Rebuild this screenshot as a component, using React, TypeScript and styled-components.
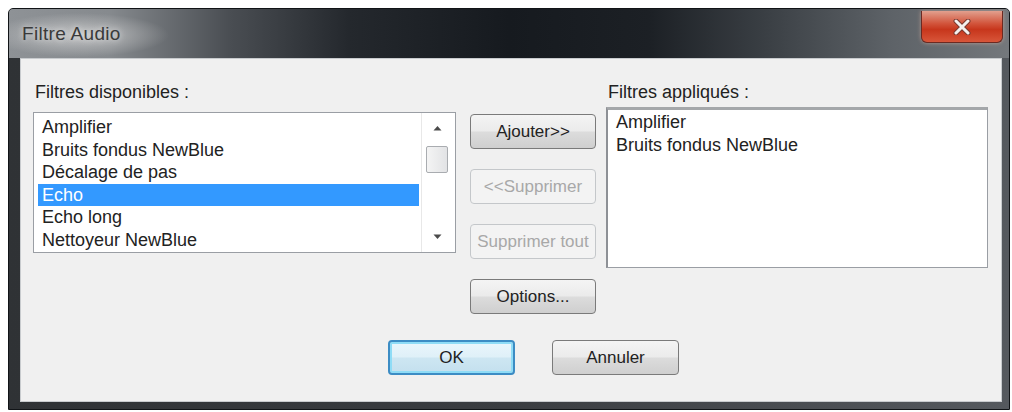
import React from 'react';
import styled, { createGlobalStyle, css } from 'styled-components';

const GlobalStyle = createGlobalStyle`
  html, body {
    margin: 0;
    padding: 0;
    background: #ffffff;
  }
  body {
    font-family: 'Liberation Sans', Arial, sans-serif;
  }
`;

const Page = styled.div`
  padding: 8px 2px 2px 8px;
`;

const Window = styled.div`
  width: 1002px;
  height: 402px;
  box-sizing: border-box;
  display: flex;
  flex-direction: column;
  border: 1px solid #111417;
  border-radius: 5px 5px 0 0;
  background: linear-gradient(90deg, #2f3235 0%, #3a3d41 50%, #55595e 100%);
  overflow: hidden;
`;

const TitleBar = styled.div`
  height: 49px;
  flex: none;
  display: flex;
  align-items: flex-start;
  justify-content: space-between;
  background:
    radial-gradient(ellipse 90px 22px at 70px 26px, rgba(215, 215, 215, 0.75), rgba(215, 215, 215, 0) 100%),
    linear-gradient(90deg, #8e9296 0%, #868a8e 10%, #4a4e53 22%, #24282d 34%, #161a1f 50%, #1c2025 64%, #3b4045 76%, #5d6267 88%, #74787c 100%);
`;

const Title = styled.div`
  margin: 14px 0 0 13px;
  font-size: 19px;
  color: #3a3a3a;
  letter-spacing: 0.3px;
  text-shadow: 0 0 6px rgba(240, 240, 240, 0.9);
`;

const CloseButton = styled.div`
  width: 82px;
  height: 32px;
  margin: 2px 6px 0 0;
  box-sizing: border-box;
  border: 1px solid #6b2a22;
  border-top: none;
  border-radius: 0 0 6px 6px;
  background: linear-gradient(180deg, #e2a08e 0%, #d2553c 40%, #c7361c 60%, #d8563a 100%);
  box-shadow: 0 0 4px rgba(255, 200, 180, 0.5);
  display: flex;
  align-items: center;
  justify-content: center;
`;

const Frame = styled.div`
  flex: 1;
  display: flex;
  padding: 0 7px 7px 11px;
`;

const Client = styled.div`
  flex: 1;
  display: flex;
  flex-direction: column;
  background: #f0f0f0;
  box-shadow: inset 0 0 0 1px #c8cbce;
  color: #222;
  font-size: 18px;
`;

const TopSection = styled.div`
  display: flex;
  align-items: flex-start;
`;

const Pane = styled.div<{ $width: number; $gap: number }>`
  width: ${(p) => p.$width}px;
  margin-left: ${(p) => p.$gap}px;
  display: flex;
  flex-direction: column;
`;

const Label = styled.div`
  margin-top: 23px;
  line-height: 22px;
  padding-left: 2px;
  white-space: nowrap;
`;

const ListBox = styled.div<{ $height: number; $offset: number }>`
  margin-top: ${(p) => p.$offset}px;
  height: ${(p) => p.$height}px;
  box-sizing: border-box;
  background: #ffffff;
  border: 1px solid #9a9ea4;
  display: flex;
`;

const AppliedListBox = styled(ListBox)`
  border-top: 3px solid #a4a7aa;
  border-left: 2px solid #8e9196;
`;

const Items = styled.div<{ $top: number }>`
  flex: 1;
  padding: ${(p) => p.$top}px 2px 0 4px;
`;

const Item = styled.div<{ $selected?: boolean }>`
  height: 22.6px;
  line-height: 22.6px;
  padding-left: 4px;
  white-space: nowrap;
  background: ${(p) => (p.$selected ? '#3399ff' : 'transparent')};
  color: ${(p) => (p.$selected ? '#ffffff' : '#222')};
`;

const ScrollBar = styled.div`
  width: 30px;
  margin-right: 3px;
  display: flex;
  flex-direction: column;
  align-items: center;
  border-left: 1px solid #e8e8e8;
`;

const ArrowBox = styled.div`
  width: 30px;
  height: 30px;
  display: flex;
  align-items: center;
  justify-content: center;
`;

const Thumb = styled.div`
  width: 22px;
  height: 27px;
  margin-top: 3px;
  box-sizing: border-box;
  border: 1px solid #a9acb0;
  border-radius: 2px;
  background: linear-gradient(90deg, #f4f4f4, #e2e3e5);
`;

const Spacer = styled.div`
  flex: 1;
`;

const ButtonColumn = styled.div`
  width: 126px;
  margin: 56px 0 0 14px;
  display: flex;
  flex-direction: column;
  gap: 20px;
`;

const Button = styled.div<{ $disabled?: boolean; $default?: boolean; $width?: number }>`
  width: ${(p) => p.$width ?? 126}px;
  height: 35px;
  box-sizing: border-box;
  display: flex;
  align-items: center;
  justify-content: center;
  white-space: nowrap;
  overflow: hidden;
  font-size: 17px;
  border-radius: 4px;
  border: 1px solid #7a7a7a;
  color: #222;
  background: linear-gradient(180deg, #f4f4f4 0%, #ebebeb 48%, #dcdcdc 52%, #cfcfcf 100%);
  ${(p) =>
    p.$disabled &&
    css`
      border-color: #c4c7ca;
      color: #a8a8a8;
      background: #f3f3f3;
    `}
  ${(p) =>
    p.$default &&
    css`
      border: 2px solid #3c8cc4;
      box-shadow: inset 0 0 0 2px #8fdcf6;
      background: linear-gradient(180deg, #eaf6fc 0%, #dff0f8 48%, #cde6f2 52%, #c4e0ee 100%);
    `}
`;

const BottomRow = styled.div`
  display: flex;
  gap: 37px;
  margin: 26px 0 0 368px;
`;

const UpArrow = () => (
  <svg width="9" height="6" viewBox="0 0 9 6">
    <path d="M0.5 5.5 L4.5 1 L8.5 5.5 Z" fill="#4a4a4a" />
  </svg>
);

const DownArrow = () => (
  <svg width="9" height="6" viewBox="0 0 9 6">
    <path d="M0.5 0.5 L4.5 5 L8.5 0.5 Z" fill="#4a4a4a" />
  </svg>
);

const CloseGlyph = () => (
  <svg width="18" height="16" viewBox="0 0 18 16">
    <path d="M3 2 L15 14 M15 2 L3 14" stroke="#7a3a30" strokeWidth="5" strokeLinecap="round" />
    <path d="M3 2 L15 14 M15 2 L3 14" stroke="#f4f0ee" strokeWidth="3" strokeLinecap="round" />
  </svg>
);

const available = ['Amplifier', 'Bruits fondus NewBlue', 'Décalage de pas', 'Echo', 'Echo long', 'Nettoyeur NewBlue'];
const applied = ['Amplifier', 'Bruits fondus NewBlue'];

const App: React.FC = () => {
  return (
    <Page>
      <GlobalStyle />
      <Window>
        <TitleBar>
          <Title>Filtre Audio</Title>
          <CloseButton>
            <CloseGlyph />
          </CloseButton>
        </TitleBar>
        <Frame>
          <Client>
            <TopSection>
              <Pane $width={423} $gap={13}>
                <Label>Filtres disponibles :</Label>
                <ListBox $height={141} $offset={9}>
                  <Items $top={3}>
                    {available.map((name) => (
                      <Item key={name} $selected={name === 'Echo'}>
                        {name}
                      </Item>
                    ))}
                  </Items>
                  <ScrollBar>
                    <ArrowBox>
                      <UpArrow />
                    </ArrowBox>
                    <Thumb />
                    <Spacer />
                    <ArrowBox>
                      <DownArrow />
                    </ArrowBox>
                  </ScrollBar>
                </ListBox>
              </Pane>
              <ButtonColumn>
                <Button>Ajouter&gt;&gt;</Button>
                <Button $disabled>&lt;&lt;Supprimer</Button>
                <Button $disabled>Supprimer tout</Button>
                <Button>Options...</Button>
              </ButtonColumn>
              <Pane $width={382} $gap={10}>
                <Label>Filtres appliqués :</Label>
                <AppliedListBox $height={161} $offset={4}>
                  <Items $top={1}>
                    {applied.map((name) => (
                      <Item key={name}>{name}</Item>
                    ))}
                  </Items>
                </AppliedListBox>
              </Pane>
            </TopSection>
            <BottomRow>
              <Button $default $width={127}>OK</Button>
              <Button $width={127}>Annuler</Button>
            </BottomRow>
          </Client>
        </Frame>
      </Window>
    </Page>
  );
};

export default App;
